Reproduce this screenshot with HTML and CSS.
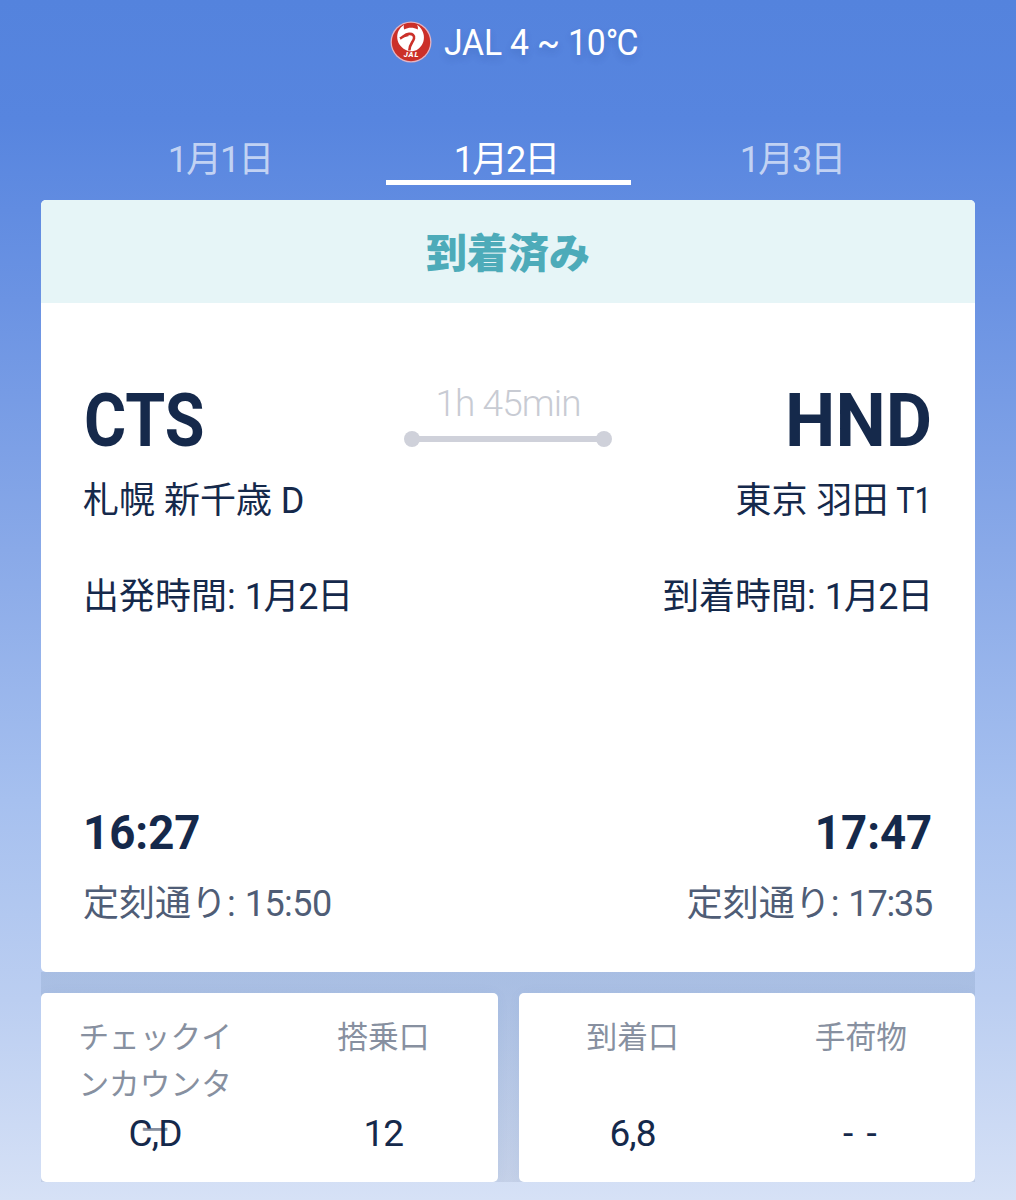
FILE: index.html
```html
<!DOCTYPE html>
<html lang="ja">
<head>
<meta charset="utf-8">
<title>JAL フライト状況</title>
<link rel="stylesheet" href="styles.css">
</head>
<body>
<div class="screen">
  <header class="header">
    <svg class="logo" viewBox="0 0 42 42" aria-hidden="true">
      <circle cx="21" cy="21" r="20.5" fill="#e3b4c4"/>
      <circle cx="21" cy="21" r="19.2" fill="#cb3029"/>
      <path d="M14 4C9 7 6.800 12 7.300 17.500c.6 5.500 4.500 10 10.200 12.300 3 1 7.500.5 10.300-1.500 4.500-3.200 6.700-8.300 6-13.800C33.200 10 30.500 6 27 4c1 1.800 1.200 3.200.7 4.500-4-2.400-9.400-2.400-13.400 0C13.800 7.200 13.500 5.800 14 4z" fill="#fff"/>
      <path d="M10 17.500c3.500-1.800 5-4.300 9-4.600 3.500-.3 5.700 1.500 5 4.600-.8 3.500-4.700 6-4.700 12" fill="none" stroke="#cb3029" stroke-width="2.600"/>
      <path d="M11.500 17l5-4 2.500 2z" fill="#cb3029"/>
      <text class="logo-text" x="21.500" y="36" text-anchor="middle">JAL</text>
    </svg>
    <h1 class="title">JAL 4 ~ 10<span class="unit">°C</span></h1>
  </header>
  <nav class="tabs">
    <a class="tab">1月1日</a>
    <a class="tab tab-active">1月2日</a>
    <a class="tab">1月3日</a>
  </nav>
  <main class="content">
    <section class="flight">
      <div class="status">到着済み</div>
      <div class="route">
        <div class="code">CTS</div>
        <div class="duration">
          <span class="duration-text">1h 45min</span>
          <span class="track"><i class="dot"></i><i class="line"></i><i class="dot"></i></span>
        </div>
        <div class="code code-end">HND</div>
      </div>
      <div class="row airport"><span>札幌 新千歳 D</span><span>東京 羽田 <span class="terminal">T1</span></span></div>
      <div class="row date"><span>出発時間: <span class="day">1月2日</span></span><span>到着時間: <span class="day">1月2日</span></span></div>
      <div class="row time"><span class="clock">16:27</span><span class="clock clock-end">17:47</span></div>
      <div class="row planned"><span>定刻通り: <span class="planned-time">15:50</span></span><span>定刻通り: <span class="planned-time planned-end">17:35</span></span></div>
    </section>
    <div class="details">
      <section class="panel">
        <div class="cell"><div class="label">チェックイ<br>ンカウンタ<br>ー</div><div class="value">C,D</div></div>
        <div class="cell"><div class="label">搭乗口</div><div class="value">12</div></div>
      </section>
      <section class="panel">
        <div class="cell"><div class="label">到着口</div><div class="value">6,8</div></div>
        <div class="cell"><div class="label">手荷物</div><div class="value value-empty">- -</div></div>
      </section>
    </div>
  </main>
</div>
</body>
</html>
```
FILE: styles.css
```css
* { box-sizing: border-box; }
body {
  margin: 0;
  font-family: Roboto, "Noto Sans CJK JP", sans-serif;
  color: #15294b;
}
.screen {
  height: 1200px;
  overflow: hidden;
  background: linear-gradient(#5483dd 0, #5785df 120px, #6b93e3 300px, #89a9e8 550px, #a6c0ef 800px, #bbcef1 1000px, #d6e1f6 1200px);
}
.header {
  height: 120px;
  padding: 21px 0 0 390px;
  display: flex;
  align-items: flex-start;
  gap: 12px;
}
.logo { width: 42px; height: 42px; flex: none; }
.logo-text { font: italic 900 7.500px Roboto, sans-serif; fill: #fff; letter-spacing: .9px; }
.title {
  margin: 0;
  font-size: 37.500px;
  line-height: 42px;
  font-weight: 400;
  color: #fff;
  white-space: nowrap;
  letter-spacing: -.2px;
  text-shadow: 0 4px 8px rgba(30, 60, 130, .2);
  transform: scaleX(.9);
  transform-origin: left;
}
.unit { letter-spacing: -2px; }
.tabs {
  height: 80px;
  display: grid;
  grid-template-columns: 245px 245px 245px;
  justify-content: center;
  column-gap: 41px;
}
.tab {
  height: 65px;
  padding: 16px 4px 0 0;
  font-size: 36px;
  line-height: 48px;
  text-align: center;
  letter-spacing: -2px;
  color: rgba(255, 255, 255, .65);
}
.tab-active { color: #fff; border-bottom: 5px solid #fff; }
.content { margin: 0 41px; width: 934px; }
.flight {
  position: relative;
  height: 772px;
  background: #fff;
  border-radius: 5px;
}
.status {
  height: 103px;
  border-radius: 5px 5px 0 0;
  background: #e6f5f7;
  color: #4dabb9;
  font-size: 41px;
  font-weight: 900;
  line-height: 108px;
  text-align: center;
}
.route {
  height: 160px;
  padding: 77px 43px 0;
  display: flex;
  justify-content: space-between;
}
.code {
  flex: 1;
  font-size: 75px;
  line-height: 80px;
  font-weight: 700;
  transform: scaleX(.86);
  transform-origin: left;
}
.code-end { text-align: right; transform: scaleX(.95); transform-origin: right; }
.duration {
  width: 208px;
  display: flex;
  flex-direction: column;
  align-items: center;
}
.duration-text {
  font-size: 37px;
  line-height: 48px;
  font-weight: 300;
  letter-spacing: -.9px;
  color: #c8cbd3;
}
.track { width: 208px; height: 16px; margin-top: 3px; display: flex; align-items: center; }
.dot { width: 16px; height: 16px; border-radius: 50%; background: #cfd1da; }
.line { flex: 1; height: 6px; margin: 0 -2px; background: #cfd1da; }
.row {
  display: flex;
  justify-content: space-between;
  padding: 0 43px 0 42px;
  font-size: 36px;
  line-height: 50px;
  white-space: nowrap;
}
.airport { padding-top: 13px; }
.terminal {
  display: inline-block;
  margin-left: -7px;
  transform: scaleX(.85);
  transform-origin: right;
}
.date { padding-top: 46px; }
.day { letter-spacing: -1.300px; }
.time { padding-top: 183px; font-size: 49px; line-height: 56px; font-weight: 700; }
.clock { transform: scaleX(.93); transform-origin: left; }
.clock-end { transform-origin: right; }
.planned { padding-top: 18px; color: #4f5d76; }
.planned-time { letter-spacing: -.5px; }
.planned-end { letter-spacing: -1.200px; }
.details {
  height: 210px;
  padding-top: 21px;
  display: flex;
  gap: 21px;
  overflow: hidden;
  background: linear-gradient(rgba(90, 120, 160, .17), rgba(120, 135, 165, .17));
}
.panel {
  flex: 1;
  display: flex;
  padding-top: 22px;
  border-radius: 5px;
  background: #fff;
  box-shadow: 0 0 14px rgba(60, 90, 150, .04);
}
.cell { flex: 1; text-align: center; }
.label {
  height: 92px;
  font-size: 30.700px;
  line-height: 46.500px;
  color: #8790a0;
}
.value {
  position: relative;
  font-size: 37px;
  line-height: 54px;
  letter-spacing: -.8px;
}
.value-empty { letter-spacing: 2px; }
```
